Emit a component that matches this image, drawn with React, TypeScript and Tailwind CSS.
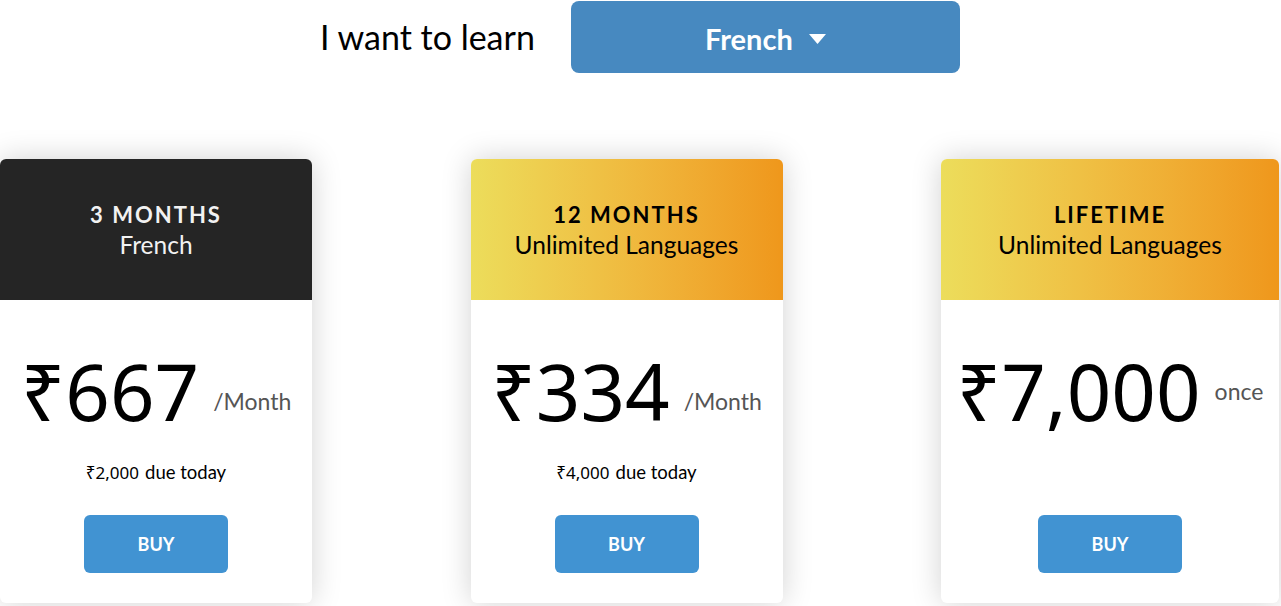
const plans = [
  {
    title: "3 MONTHS",
    subtitle: "French",
    dark: true,
    price: "₹667",
    unit: "/Month",
    due: "₹2,000",
    width: "w-[312px]",
  },
  {
    title: "12 MONTHS",
    subtitle: "Unlimited Languages",
    dark: false,
    price: "₹334",
    unit: "/Month",
    due: "₹4,000",
    width: "w-[312px]",
  },
  {
    title: "LIFETIME",
    subtitle: "Unlimited Languages",
    dark: false,
    price: "₹7,000",
    unit: "once",
    due: null,
    width: "w-[338px]",
  },
];

function PlanCard({ plan }: { plan: (typeof plans)[number] }) {
  const once = plan.unit === "once";
  return (
    <div
      className={`${plan.width} shrink-0 overflow-hidden rounded-md bg-white shadow-[0_0_30px_rgba(0,0,0,0.18)]`}
    >
      <div
        className={`flex h-[141px] flex-col items-center justify-center pt-px ${
          plan.dark
            ? "bg-[#252525] text-[#f2f2f2]"
            : "bg-gradient-to-r from-[#ecdd5b] to-[#ef971b] text-black"
        }`}
      >
        <p className="text-[22px] font-bold leading-[30px] tracking-[2px]">{plan.title}</p>
        <p className="text-[24.5px] leading-[30px]">{plan.subtitle}</p>
      </div>
      <div className="flex flex-col items-center pb-[30px]">
        <div className="mt-[46px] flex h-[90px] items-baseline justify-center gap-[14px]">
          <span className="font-['Noto_Sans',sans-serif] text-[78px] leading-[90px] text-black">
            {plan.price}
          </span>
          <span
            className={`text-[23px] text-[#555] ${once ? "relative -top-[21px]" : "relative -top-[11px]"}`}
          >
            {plan.unit}
          </span>
        </div>
        <div className="mt-[26px] h-[20px] text-[18.5px] leading-[20px] text-black">
          {plan.due && (
            <span>
              <span className="font-['Noto_Sans',sans-serif] text-[17px]">{plan.due}</span>
              <span className="ml-[6px]">due today</span>
            </span>
          )}
        </div>
        <button className="mt-[33px] h-[58px] w-[144px] rounded-md bg-[#4193d2] text-[18px] font-bold text-white">
          BUY
        </button>
      </div>
    </div>
  );
}

export default function App() {
  return (
    <div className="min-h-[606px] w-[1281px] overflow-hidden bg-white font-['Lato',sans-serif]">
      <div className="flex items-center pl-[320px] pt-px">
        <span className="text-[34px] leading-[40px] text-black">I want to learn</span>
        <button className="ml-[36px] flex h-[72px] w-[389px] items-center justify-center gap-[16px] rounded-lg bg-[#4789c0] pt-[4px] text-white">
          <span className="text-[29px] font-bold">French</span>
          <svg width="17" height="12" viewBox="0 0 17 12" aria-hidden>
            <path d="M0 1h17L8.5 11z" fill="white" />
          </svg>
        </button>
      </div>
      <div className="mt-[86px] flex gap-[158.5px]">
        {plans.map((plan) => (
          <PlanCard key={plan.title} plan={plan} />
        ))}
      </div>
    </div>
  );
}
